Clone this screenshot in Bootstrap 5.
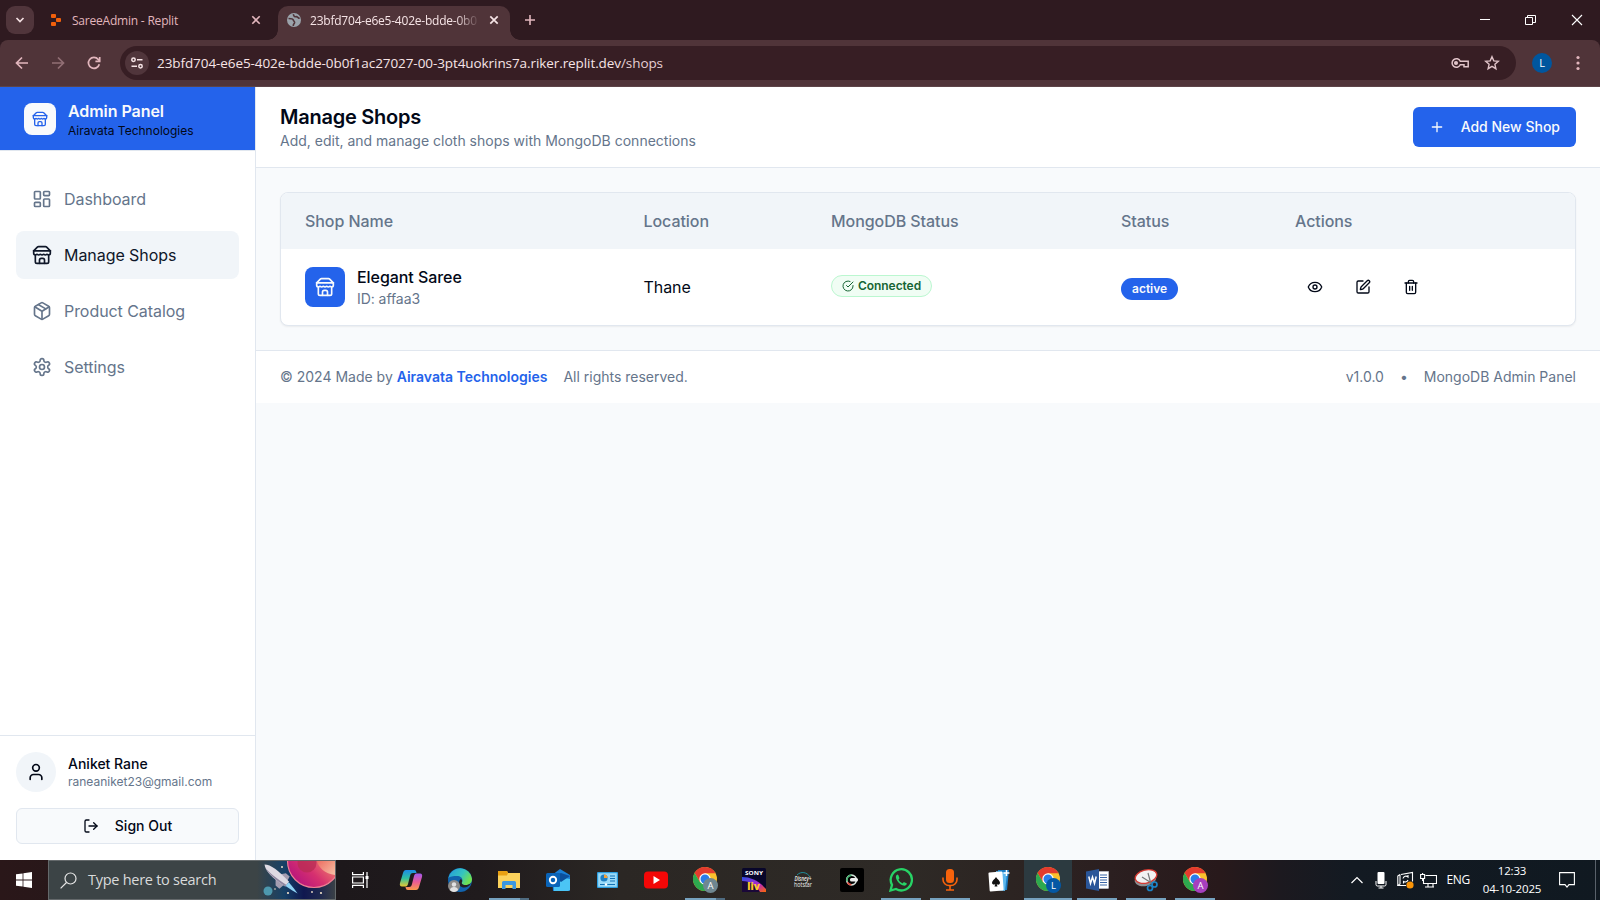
<!DOCTYPE html>
<html lang="en">
<head>
<meta charset="utf-8">
<meta name="viewport" content="width=device-width, initial-scale=1">
<title>Manage Shops</title>
<link href="https://cdn.jsdelivr.net/npm/bootstrap@5.3.0/dist/css/bootstrap.min.css" rel="stylesheet">
<script src="https://cdn.jsdelivr.net/npm/bootstrap@5.3.0/dist/js/bootstrap.bundle.min.js" defer></script>
<style>
  :root { --brand:#2463eb; --muted:#65758b; --ink:#020817; --line:#e1e7ef; --soft:#f1f5f9; --page:#f8fafc; }
  body { font-family:Inter,sans-serif; color:var(--ink); width:1600px; height:900px; overflow:hidden; background:var(--page); }
  svg { display:block; flex:none; }
  .lu { fill:none; stroke:currentColor; stroke-width:2; stroke-linecap:round; stroke-linejoin:round; }
  .sys { font-family:"Open Sans","Noto Sans",sans-serif; }
  /* browser */
  .tabstrip { height:40px; background:#2f1a20; color:#e2b6bd; font-size:12px; }
  .tab-menu { width:28px; height:28px; margin:6px 0 0 6px; border-radius:9px; background:#50353b; color:#f3dfe2; }
  .tab-idle { width:243px; height:40px; padding:0 16px 0 15px; }
  .tab-idle span { margin:1px 0 0 9px; letter-spacing:-.21px; }
  .tab-live { width:232px; height:34px; margin:6px 0 0 1px; background:#503439; border-radius:10px 10px 0 0; padding:0 11px 6px 10px; color:#f6e4e6; position:relative; }
  .tab-live::before,.tab-live::after { content:""; position:absolute; bottom:0; width:10px; height:10px; }
  .tab-live::before { left:-10px; background:radial-gradient(circle at 0 0,transparent 9.5px,#503439 10px); }
  .tab-live::after { right:-10px; background:radial-gradient(circle at 100% 0,transparent 9.5px,#503439 10px); }
  .tab-label { width:173px; margin:1px 0 0 9px; white-space:nowrap; letter-spacing:-.22px; -webkit-mask-image:linear-gradient(90deg,#000 146px,transparent 170px); mask-image:linear-gradient(90deg,#000 146px,transparent 170px); }
  .toolbar-wrap { height:47px; background:#2f1a20; }
  .toolbar { height:47px; background:#503439; border-radius:8px 8px 0 0; color:#e2b6bd; border-bottom:1px solid #5d4448; }
  .omnibox { height:34px; width:1396px; border-radius:17px; background:#371e24; color:#f6e4e6; font-size:13.5px; letter-spacing:-.08px; }
  .site-chip { width:24px; height:24px; border-radius:50%; background:#50353b; margin-left:5px; }
  .avatar-l { width:20px; height:20px; border-radius:50%; background:#00569e; color:#fff; font-size:11px; }
  /* app */
  .app { height:773px; }
  .sidebar { width:256px; flex:none; background:#fff; border-right:1px solid var(--line); }
  .brand { height:64px; background:var(--brand); border-bottom:1px solid var(--line); padding:0 24px; gap:12px; }
  .brand-logo { width:32px; height:32px; border-radius:8px; background:var(--page); color:var(--brand); }
  .brand h1 { font-size:16px; font-weight:600; line-height:24px; margin:0; color:var(--page); letter-spacing:-.06px; }
  .brand p { font-size:12px; line-height:16px; margin:0; }
  .side-nav { padding:24px 16px; gap:8px; }
  .side-link { height:48px; padding:0 16px; gap:12px; color:var(--muted); border-radius:8px; font-size:16px; letter-spacing:-.06px; }
  .side-link.active { background:var(--soft); color:#0f1729; }
  .side-user { border-top:1px solid var(--line); padding:16px; }
  .user-pic { width:40px; height:40px; border-radius:50%; background:var(--soft); }
  .txt-sm { font-size:14px; line-height:20px; }
  .txt-xs { font-size:12px; line-height:16px; }
  .med { font-weight:500; }
  .muted { color:var(--muted); }
  .btn-out { height:36px; border:1px solid var(--line); border-radius:6px; background:var(--page); gap:16px; font-size:14px; line-height:20px; font-weight:500; }
  .page-head { background:#fff; border-bottom:1px solid var(--line); padding:16px 24px; }
  .page-head h2 { font-size:20px; line-height:28px; font-weight:600; margin:0; letter-spacing:-.24px; }
  .btn-add { height:40px; padding:0 16px; gap:16px; background:var(--brand); color:var(--page); border-radius:6px; font-size:14px; line-height:20px; font-weight:500; }
  .shops { border:1px solid var(--line); border-radius:8px; overflow:hidden; background:#fff; box-shadow:0 1px 2px rgba(0,0,0,.06); }
  .shops table { table-layout:fixed; width:100%; border-collapse:collapse; letter-spacing:-.06px; }
  .shops th { height:56px; padding:0 24px; background:var(--soft); color:var(--muted); font-weight:500; }
  .shops td { height:76px; padding:0 24px; }
  .shop-ico { width:40px; height:40px; border-radius:8px; background:var(--brand); color:var(--page); }
  .pill { height:22px; border-radius:11px; padding:0 10px; font-size:12px; line-height:16px; font-weight:600; border:1px solid transparent; }
  .pill-ok { background:#f0fdf4; border-color:#bbf7d0; color:#166534; gap:4px; margin-bottom:3px; }
  .pill-on { background:var(--brand); color:var(--page); margin-top:4px; letter-spacing:0; }
  .act { width:40px; height:36px; }
  .app-foot { background:#fff; border-top:1px solid var(--line); padding:16px 24px; }
  .app-foot b { color:var(--brand); font-weight:600; }
  /* taskbar */
  .taskbar { height:40px; color:#fff; background:linear-gradient(90deg,#2a1719 0,#1d181b 340px,#201b1d 480px,#2b2724 620px,#2e2a26 900px,#2c2422 1010px,#2b1f20 1110px,#28191b 1220px,#1c191f 1280px,#131a22 1350px,#101921 1600px); }
  .tb-start { width:48px; }
  .tb-search { width:288px; background:#3c4446; border:1px solid #64696b; font-size:14.5px; letter-spacing:-.27px; color:#d9dbdb; padding-left:11px; }
  .tb-view { width:51px; padding-right:3px; }
  .tb-app { width:49px; height:40px; padding-right:1px; position:relative; }
  .tb-app.run::after { content:""; position:absolute; left:4px; right:5px; bottom:0; height:2px; background:#76a2bf; }
  .tb-app.multi::after { background:linear-gradient(90deg,#76a2bf 31px,#4f6b80 31px); }
  .tb-app.live { background:linear-gradient(#2c3a40,#2c3a40) 0 0/48px 40px no-repeat; }
  .tb-app.live::after { left:0; right:1px; }
  .lang { margin-left:9px; font-size:12px; letter-spacing:-.3px; }
  .clock { font-size:11.5px; line-height:18px; width:76px; margin-left:4px; letter-spacing:-.15px; }
</style>
</head>
<body class="d-flex flex-column">
<svg width="0" height="0" class="position-absolute">
  <defs>
    <symbol id="store" viewBox="0 0 24 24"><path d="m2 7 4.41-4.41A2 2 0 0 1 7.83 2h8.34a2 2 0 0 1 1.42.59L22 7"/><path d="M4 12v8a2 2 0 0 0 2 2h12a2 2 0 0 0 2-2v-8"/><path d="M15 22v-4a2 2 0 0 0-2-2h-2a2 2 0 0 0-2 2v4"/><path d="M2 7h20"/><path d="M22 7v3a2 2 0 0 1-2 2a2.7 2.7 0 0 1-1.59-.63.7.7 0 0 0-.82 0A2.7 2.7 0 0 1 16 12a2.7 2.7 0 0 1-1.59-.63.7.7 0 0 0-.82 0A2.7 2.7 0 0 1 12 12a2.7 2.7 0 0 1-1.59-.63.7.7 0 0 0-.82 0A2.7 2.7 0 0 1 8 12a2.7 2.7 0 0 1-1.59-.63.7.7 0 0 0-.82 0A2.7 2.7 0 0 1 4 12a2 2 0 0 1-2-2V7"/></symbol>
    <symbol id="chrome" viewBox="0 0 24 24"><circle cx="12" cy="12" r="12" fill="#fbc02d"/><path d="M12 6.3h10.5A12 12 0 0 0 1.6 6l5 8.5z" fill="#e33b2e"/><path d="M1.600 6A12 12 0 0 0 12 24l5-8.800-10 0z" fill="#2da94f"/><circle cx="12" cy="12" r="5.7" fill="#fff"/><circle cx="12" cy="12" r="4.5" fill="#2a7de9"/></symbol>
    <linearGradient id="gCopA" x1="0" y1="0" x2="0" y2="1"><stop offset="0" stop-color="#1b8be8"/><stop offset=".5" stop-color="#2fc1a0"/><stop offset="1" stop-color="#e9c631"/></linearGradient>
    <linearGradient id="gCopB" x1="0" y1="0" x2="0" y2="1"><stop offset="0" stop-color="#a259ee"/><stop offset=".5" stop-color="#ea5a96"/><stop offset="1" stop-color="#fb9a4b"/></linearGradient>
    <linearGradient id="gEdge" x1="0" y1="0" x2="1" y2=".5"><stop offset="0" stop-color="#2499dc"/><stop offset=".6" stop-color="#35c4c0"/><stop offset="1" stop-color="#6fe052"/></linearGradient>
    <linearGradient id="gSony" x1="0" y1="0" x2="1" y2="1"><stop offset="0" stop-color="#2a50e8"/><stop offset=".6" stop-color="#b225c9"/><stop offset="1" stop-color="#ff6a00"/></linearGradient>
    <linearGradient id="gPlanet" x1=".2" y1="1" x2=".75" y2=".45"><stop offset="0" stop-color="#b3127f"/><stop offset=".5" stop-color="#d6306f"/><stop offset="1" stop-color="#f0806c"/></linearGradient>
    <linearGradient id="gSky" x1="0" y1="0" x2="1" y2="0"><stop offset="0" stop-color="#3c4446"/><stop offset=".35" stop-color="#12406a"/><stop offset=".6" stop-color="#0b1250"/><stop offset=".8" stop-color="#1a2450"/><stop offset="1" stop-color="#3a4046"/></linearGradient>
    <linearGradient id="gPeach" x1="0" y1="0" x2="1" y2="1"><stop offset="0" stop-color="#ee6f60"/><stop offset="1" stop-color="#f8d0b0"/></linearGradient>
  </defs>
</svg>

<header class="sys">
  <div class="tabstrip d-flex">
    <div class="tab-menu d-flex align-items-center justify-content-center"><svg width="10" height="10" viewBox="0 0 10 10" fill="none" stroke="currentColor" stroke-width="1.7"><path d="m1.500 3 3.500 3.500L8.500 3"/></svg></div>
    <div class="tab-idle d-flex align-items-center">
      <svg width="14" height="14" viewBox="0 0 14 14" fill="#f2600c"><rect x="2" y="1" width="5" height="4" rx="1"/><rect x="7" y="5" width="5" height="4" rx="1"/><rect x="2" y="9" width="5" height="4" rx="1"/></svg>
      <span>SareeAdmin - Replit</span>
      <svg class="ms-auto" width="10" height="10" viewBox="0 0 10 10" stroke="currentColor" stroke-width="1.6"><path d="m1.300 1.300 7.400 7.400M8.700 1.300 1.300 8.700"/></svg>
    </div>
    <div class="tab-live d-flex align-items-center">
      <svg style="margin-left:-1px" width="14" height="14" viewBox="0 0 14 14"><circle cx="7" cy="7" r="7" fill="#9ba3ab"/><path d="M1.500 5.500c2.500 0 4.500 0 4.800 1.500.3 1.400 1.500 1.300 1.300 2.700-.2 1.200-1.500 1.300-1.300 3.300M6.500 1.200C6.300 3.200 8 4 9.200 3.600c1.300-.3 1.800 1.700 3.500 1.700" fill="none" stroke="#503439" stroke-width="1.600"/></svg>
      <div class="tab-label">23bfd704-e6e5-402e-bdde-0b0</div>
      <svg class="ms-auto" width="10" height="10" viewBox="0 0 10 10" stroke="currentColor" stroke-width="1.700"><path d="m1.300 1.300 7.400 7.400M8.700 1.300 1.300 8.700"/></svg>
    </div>
    <svg class="align-self-center" style="margin-left:14px" width="12" height="12" viewBox="0 0 12 12" stroke="currentColor" stroke-width="1.6"><path d="M6 1v10M1 6h10"/></svg>
    <div class="ms-auto d-flex align-items-center text-white" style="gap:35px;padding-right:17px">
      <svg width="10" height="12" viewBox="0 0 10 12" stroke="currentColor"><path d="M0 5.500h10"/></svg>
      <svg width="11" height="12" viewBox="0 0 11 12" stroke="currentColor" fill="none"><path d="M.5 3.500h7v7h-7zM2.500 3.500v-2h8v7h-3"/></svg>
      <svg width="12" height="12" viewBox="0 0 12 12" stroke="currentColor" stroke-width="1.100"><path d="m1 1 10 10M11 1 1 11"/></svg>
    </div>
  </div>
  <div class="toolbar-wrap"><div class="toolbar d-flex align-items-center">
    <svg style="margin-left:15px" width="14" height="14" viewBox="0 0 14 14" fill="none" stroke="currentColor" stroke-width="1.700"><path d="M13 7H2M7 1.500 1.500 7 7 12.500"/></svg>
    <svg style="margin-left:22px;opacity:.45" width="14" height="14" viewBox="0 0 14 14" fill="none" stroke="currentColor" stroke-width="1.700"><path d="M1 7h11M7 1.500 12.500 7 7 12.500"/></svg>
    <svg style="margin-left:22px" width="14" height="14" viewBox="0 0 14 14" fill="none" stroke="currentColor" stroke-width="1.700"><path d="M12.300 8.200A5.500 5.500 0 1 1 11.200 3.400L12.600 5"/><path d="M12.700 1v4.300H8.400"/></svg>
    <div class="omnibox d-flex align-items-center" style="margin-left:19px">
      <div class="site-chip d-flex align-items-center justify-content-center"><svg width="14" height="14" viewBox="0 0 14 14" fill="none" stroke="currentColor" stroke-width="1.500"><circle cx="3.500" cy="3.800" r="1.700"/><path d="M7 3.800h5.500M1.500 10.200H7"/><circle cx="10.500" cy="10.200" r="1.700"/></svg></div>
      <span style="margin-left:8px">23bfd704-e6e5-402e-bdde-0b0f1ac27027-00-3pt4uokrins7a.riker.replit.dev<span style="color:#e6d0d4">/shops</span></span>
      <svg class="ms-auto" width="18" height="12" viewBox="0 0 18 12" fill="none" stroke="#e0c3c8" stroke-width="1.500"><path d="M9.300 4.200A4.300 4.300 0 1 0 9.300 7.800H13v2h4.200V4.200z"/><circle cx="5" cy="6" r="1.300" fill="#e0c3c8"/></svg>
      <svg style="margin:0 16px 0 15px" width="16" height="16" viewBox="0 0 16 16" fill="none" stroke="#e0c3c8" stroke-width="1.400"><path d="m8 1.700 1.800 4.200 4.500.4-3.400 3 1 4.400L8 11.400l-3.900 2.300 1-4.400-3.400-3 4.500-.4z"/></svg>
    </div>
    <div class="avatar-l d-flex align-items-center justify-content-center" style="margin-left:16px">L</div>
    <svg style="margin-left:24px" width="4" height="16" viewBox="0 0 4 16" fill="currentColor"><circle cx="2" cy="2.500" r="1.600"/><circle cx="2" cy="8" r="1.600"/><circle cx="2" cy="13.500" r="1.600"/></svg>
  </div></div>
</header>

<div class="app d-flex">
  <aside class="sidebar d-flex flex-column">
    <div class="brand d-flex align-items-center">
      <div class="brand-logo d-flex align-items-center justify-content-center"><svg class="lu" width="16" height="16"><use href="#store"/></svg></div>
      <div><h1>Admin Panel</h1><p>Airavata Technologies</p></div>
    </div>
    <nav class="side-nav nav flex-column flex-grow-1">
      <a class="side-link d-flex align-items-center text-decoration-none"><svg class="lu" width="20" height="20" viewBox="0 0 24 24"><rect width="7" height="9" x="3" y="3" rx="1"/><rect width="7" height="5" x="14" y="3" rx="1"/><rect width="7" height="9" x="14" y="12" rx="1"/><rect width="7" height="5" x="3" y="16" rx="1"/></svg><span>Dashboard</span></a>
      <a class="side-link active d-flex align-items-center text-decoration-none"><svg class="lu" width="20" height="20"><use href="#store"/></svg><span>Manage Shops</span></a>
      <a class="side-link d-flex align-items-center text-decoration-none"><svg class="lu" width="20" height="20" viewBox="0 0 24 24"><path d="M11 21.730a2 2 0 0 0 2 0l7-4A2 2 0 0 0 21 16V8a2 2 0 0 0-1-1.730l-7-4a2 2 0 0 0-2 0l-7 4A2 2 0 0 0 3 8v8a2 2 0 0 0 1 1.730z"/><path d="M12 22V12"/><path d="m3.300 7 7.703 4.734a2 2 0 0 0 1.994 0L20.700 7"/><path d="m7.500 4.270 9 5.150"/></svg><span>Product Catalog</span></a>
      <a class="side-link d-flex align-items-center text-decoration-none"><svg class="lu" width="20" height="20" viewBox="0 0 24 24"><path d="M12.220 2h-.44a2 2 0 0 0-2 2v.18a2 2 0 0 1-1 1.730l-.43.25a2 2 0 0 1-2 0l-.15-.08a2 2 0 0 0-2.730.73l-.22.38a2 2 0 0 0 .73 2.730l.15.1a2 2 0 0 1 1 1.720v.51a2 2 0 0 1-1 1.740l-.15.09a2 2 0 0 0-.73 2.730l.22.38a2 2 0 0 0 2.730.73l.15-.08a2 2 0 0 1 2 0l.43.25a2 2 0 0 1 1 1.730V20a2 2 0 0 0 2 2h.44a2 2 0 0 0 2-2v-.18a2 2 0 0 1 1-1.730l.43-.25a2 2 0 0 1 2 0l.15.08a2 2 0 0 0 2.730-.73l.22-.39a2 2 0 0 0-.73-2.730l-.15-.08a2 2 0 0 1-1-1.740v-.5a2 2 0 0 1 1-1.740l.15-.09a2 2 0 0 0 .73-2.730l-.22-.38a2 2 0 0 0-2.730-.73l-.15.08a2 2 0 0 1-2 0l-.43-.25a2 2 0 0 1-1-1.730V4a2 2 0 0 0-2-2z"/><circle cx="12" cy="12" r="3"/></svg><span>Settings</span></a>
    </nav>
    <div class="side-user">
      <div class="d-flex align-items-center mb-3" style="gap:12px">
        <div class="user-pic d-flex align-items-center justify-content-center"><svg class="lu" width="20" height="20" viewBox="0 0 24 24"><path d="M19 21v-2a4 4 0 0 0-4-4H9a4 4 0 0 0-4 4v2"/><circle cx="12" cy="7" r="4"/></svg></div>
        <div><div class="txt-sm med">Aniket Rane</div><div class="txt-xs muted">raneaniket23@gmail.com</div></div>
      </div>
      <div class="btn-out d-flex align-items-center justify-content-center"><svg class="lu" width="16" height="16" viewBox="0 0 24 24"><path d="M9 21H5a2 2 0 0 1-2-2V5a2 2 0 0 1 2-2h4"/><path d="m16 17 5-5-5-5"/><path d="M21 12H9"/></svg><span>Sign Out</span></div>
    </div>
  </aside>

  <div class="flex-grow-1">
    <div class="page-head d-flex align-items-center justify-content-between">
      <div><h2>Manage Shops</h2><div class="txt-sm muted">Add, edit, and manage cloth shops with MongoDB connections</div></div>
      <div class="btn-add d-flex align-items-center"><svg class="lu" width="16" height="16" viewBox="0 0 24 24"><path d="M5 12h14M12 5v14"/></svg><span>Add New Shop</span></div>
    </div>
    <main class="p-4">
      <div class="shops">
        <table>
          <colgroup><col style="width:338.500px"><col style="width:187.500px"><col style="width:290px"><col style="width:174px"><col></colgroup>
          <thead><tr><th>Shop Name</th><th>Location</th><th>MongoDB Status</th><th>Status</th><th>Actions</th></tr></thead>
          <tbody><tr>
            <td><div class="d-flex align-items-center" style="gap:12px"><div class="shop-ico d-flex align-items-center justify-content-center"><svg class="lu" width="20" height="20"><use href="#store"/></svg></div><div><div class="med">Elegant Saree</div><div class="txt-sm muted">ID: affaa3</div></div></div></td>
            <td>Thane</td>
            <td><div class="pill pill-ok d-inline-flex align-items-center align-middle"><svg class="lu" width="12" height="12" viewBox="0 0 24 24"><path d="M22 11.080V12a10 10 0 1 1-5.930-9.140"/><path d="m9 11 3 3L22 4"/></svg><span>Connected</span></div></td>
            <td><div class="pill pill-on d-inline-flex align-items-center align-middle">active</div></td>
            <td><div class="d-flex gap-2" style="margin-left:-.5px">
              <div class="act d-flex align-items-center justify-content-center"><svg class="lu" width="16" height="16" viewBox="0 0 24 24"><path d="M2.062 12.348a1 1 0 0 1 0-.696 10.750 10.750 0 0 1 19.876 0 1 1 0 0 1 0 .696 10.750 10.750 0 0 1-19.876 0"/><circle cx="12" cy="12" r="3"/></svg></div>
              <div class="act d-flex align-items-center justify-content-center"><svg class="lu" width="16" height="16" viewBox="0 0 24 24"><path d="M12 3H5a2 2 0 0 0-2 2v14a2 2 0 0 0 2 2h14a2 2 0 0 0 2-2v-7"/><path d="M18.375 2.625a1 1 0 0 1 3 3l-9.013 9.014a2 2 0 0 1-.853.505l-2.873.84a.5.5 0 0 1-.62-.62l.84-2.873a2 2 0 0 1 .506-.852z"/></svg></div>
              <div class="act d-flex align-items-center justify-content-center"><svg class="lu" width="16" height="16" viewBox="0 0 24 24"><path d="M3 6h18"/><path d="M19 6v14c0 1-1 2-2 2H7c-1 0-2-1-2-2V6"/><path d="M8 6V4c0-1 1-2 2-2h4c1 0 2 1 2 2v2"/><path d="M10 11v6M14 11v6"/></svg></div>
            </div></td>
          </tr></tbody>
        </table>
      </div>
    </main>
    <footer class="app-foot txt-sm muted d-flex justify-content-between">
      <div class="d-flex gap-3"><span>© 2024 Made by <b>Airavata Technologies</b></span><span>All rights reserved.</span></div>
      <div class="d-flex gap-3"><span>v1.0.0</span><span>•</span><span>MongoDB Admin Panel</span></div>
    </footer>
  </div>
</div>

<footer class="taskbar sys d-flex">
  <div class="tb-start d-flex align-items-center justify-content-center"><svg width="16" height="16" viewBox="0 0 16 16" fill="#fff"><path d="M0 2.300 6.600 1.400v6.200H0zM7.400 1.300 16 0v7.600H7.400zM0 8.400h6.600v6.200L0 13.700zM7.400 8.400H16V16l-8.600-1.300z"/></svg></div>
  <div class="tb-search d-flex align-items-center">
    <svg width="17" height="17" viewBox="0 0 17 17" fill="none" stroke="#e6e6e6" stroke-width="1.200"><circle cx="10.500" cy="6.500" r="5.500"/><path d="M6.500 10.500.6 16.400"/></svg>
    <span style="margin-left:11px">Type here to search</span>
    <svg class="ms-auto" width="78" height="38" viewBox="0 0 78 38">
      <rect width="78" height="38" fill="url(#gSky)" opacity=".9"/>
      <circle cx="57" cy="0" r="26.500" fill="url(#gPlanet)" stroke="#ee7f93" stroke-width="1.200"/>
      <path d="M60 0c1 6 8 13 18 14V0z" fill="url(#gPeach)" opacity=".85"/>
      <circle cx="50" cy="2" r="9.500" fill="#b92c55" opacity=".8"/>
      <circle cx="11" cy="30" r="4.500" fill="#4d98ae"/>
      <g transform="translate(7.500 3.500) rotate(40)">
        <path d="M17-1 22-7h5l1 5zM17 3l5 6h5l1-6z" fill="#a49db0"/>
        <path d="M0 0c5-4 14-4.500 30-2.500v6C14 5.500 5 4.500 0 0z" fill="#dedae3"/>
        <path d="M3 2.200c6 2.500 17 2.500 27 1.300V1.500C18 3 10 3.200 3 2.200z" fill="#8f86a0"/>
        <path d="M30-2 38-.5l6 1.500-6 1-8 1z" fill="#8fd3f5"/>
      </g>
      <g fill="#f0e0c8"><circle cx="25" cy="6" r="1"/><circle cx="18" cy="28" r=".8"/><circle cx="31" cy="32" r="1.100"/><circle cx="55" cy="31" r=".9"/><circle cx="64" cy="32" r="1.100"/></g>
    </svg>
  </div>
  <div class="tb-view d-flex align-items-center justify-content-center"><svg width="17" height="16" viewBox="0 0 17 16" fill="none" stroke="#fff" stroke-width="1.200"><path d="M.6 0v2.600h10.800V0M.6 16v-2.600h10.800V16M.6 5h10.800v6H.6zM15 0v16"/><path d="M13.500 4h3v3h-3z" fill="#fff" stroke="none"/></svg></div>

  <div class="tb-app d-flex align-items-center justify-content-center"><svg width="24" height="24" viewBox="0 0 24 24"><path d="M7 2h8c2 0 2 1 2.500 3H14c-2 0-2.500 1-3 3l-2 8c-.5 2-1.500 2.500-3 2.500H3C1 18.500.5 17 1 15L4 5c.5-2 1.500-3 3-3z" fill="url(#gCopA)"/><path d="M17 22H9c-2 0-2-1-2.500-3H10c2 0 2.500-1 3-3l2-8c.5-2 1.500-2.500 3-2.500h3c2 0 2.500 1.500 2 3.500l-3 10c-.5 2-1.500 3-3 3z" fill="url(#gCopB)"/></svg></div>
  <div class="tb-app d-flex align-items-center justify-content-center"><svg width="24" height="24" viewBox="0 0 24 24"><circle cx="12" cy="12" r="12" fill="#1263ad"/><path d="M.3 10A12 12 0 0 1 24 11c0 4-3 6-6.500 6-3 0-4.500-1.500-3.500-3 1.500-3-1-6-5-6C5 8 2 8.500.3 10z" fill="url(#gEdge)"/><path d="M14 14c-1 1.500.5 3 3.500 3 2 0 4-.5 5.500-2-3 6-9 5-11 3s-1-6 1-7c1 1 1.500 2 1 3z" fill="#242023"/><circle cx="6" cy="18" r="6" fill="#8d8b89"/><circle cx="6" cy="16.500" r="2.200" fill="#e2e2e2"/><path d="M2 22c0-4 8-4 8 0-2 2.500-6 2.500-8 0z" fill="#e2e2e2"/></svg></div>
  <div class="tb-app run multi d-flex align-items-center justify-content-center"><svg width="22" height="18" viewBox="0 0 22 18"><path d="M0 0h9l1 2h12v15H0z" fill="#fbd25c"/><path d="M0 0h9l1 2-1 2.500H0z" fill="#e8a012"/><path d="M4 18v-6.500q0-1.500 1.500-1.500h11Q18 10 18 11.500V18h-3.500v-4h-7v4z" fill="#3c97e0"/></svg></div>
  <div class="tb-app d-flex align-items-center justify-content-center"><svg width="24" height="22" viewBox="0 0 24 22"><path d="M6 6 14 0l10 6v15a1 1 0 0 1-1 1H7z" fill="#1a7fd6"/><path d="m7 7 17 3v11l-2 1H8z" fill="#4bc5f5"/><path d="m24 7-9 6-8-6 8-3z" fill="#0b4f9c"/><rect y="4" width="14" height="14" rx="1.500" fill="#0a64b8"/><circle cx="7" cy="11" r="3.200" fill="none" stroke="#fff" stroke-width="1.900"/></svg></div>
  <div class="tb-app d-flex align-items-center justify-content-center"><svg width="21" height="16" viewBox="0 0 21 16"><rect width="21" height="16" rx="1" fill="#2d9fe0"/><rect x="1.200" y="1.200" width="18.600" height="13.600" fill="#9adaf8"/><circle cx="7" cy="6" r="3.600" fill="#1e7fc2"/><path d="M7 6V2.400A3.600 3.600 0 0 1 10.600 6z" fill="#f1a13b"/><path d="M13 4h5M13 6.500h5M13 9h5" stroke="#1272b6" stroke-width="1.200"/><path d="M3 12.500h15" stroke="#1272b6"/><circle cx="9" cy="12.500" r="1.200" fill="#fff"/></svg></div>
  <div class="tb-app d-flex align-items-center justify-content-center"><svg width="24" height="18" viewBox="0 0 24 18"><rect y=".5" width="24" height="17" rx="4" fill="#f40707"/><path d="m9.500 5 6.500 4-6.500 4z" fill="#fff"/></svg></div>
  <div class="tb-app run multi d-flex align-items-center justify-content-center"><svg width="26" height="26" viewBox="0 0 26 26"><use href="#chrome" x="1" width="24" height="24"/><circle cx="18.500" cy="18.500" r="7.500" fill="#6f8791"/><text x="18.500" y="22" font-size="9.500" fill="#fff" text-anchor="middle">A</text></svg></div>
  <div class="tb-app d-flex align-items-center justify-content-center"><svg width="24" height="24" viewBox="0 0 24 24"><rect width="24" height="24" rx="1.500" fill="#08062a"/><path d="M0 9c9 0 17 4 24 12v3H0z" fill="url(#gSony)"/><path d="M0 13c8 0 14 4 18 11H0z" fill="#1a0838"/><text x="12" y="7" font-size="6" font-weight="700" fill="#fff" text-anchor="middle" textLength="18" lengthAdjust="spacingAndGlyphs">SONY</text><text x="11.500" y="22" font-size="10" font-weight="800" fill="#ffc72c" text-anchor="middle">liv</text></svg></div>
  <div class="tb-app d-flex align-items-center justify-content-center"><svg width="24" height="24" viewBox="0 0 24 24"><path d="M6 7c4-4 10-3 13 2" fill="none" stroke="#1d8f9c" stroke-width="1"/><text x="12" y="12.500" font-size="7" font-style="italic" font-weight="600" fill="#eee" text-anchor="middle" textLength="17" lengthAdjust="spacingAndGlyphs">Disney+</text><text x="12" y="19" font-size="6.500" fill="#eee" text-anchor="middle" textLength="18" lengthAdjust="spacingAndGlyphs">hotstar</text></svg></div>
  <div class="tb-app d-flex align-items-center justify-content-center"><svg width="24" height="24" viewBox="0 0 24 24"><rect width="24" height="24" rx="2" fill="#000"/><circle cx="11.500" cy="12" r="4.800" fill="none" stroke="#d9e3dc" stroke-width="1.700"/><path d="M11.500 7.200a4.800 4.800 0 0 0-4.500 6" fill="none" stroke="#3db36b" stroke-width="1.500"/><path d="M7.500 14.500a4.800 4.800 0 0 0 4 2.300" fill="none" stroke="#e2483b" stroke-width="1.500"/><rect x="10" y="10" width="8" height="3.600" rx="1.500" fill="#eee"/></svg></div>
  <div class="tb-app run d-flex align-items-center justify-content-center"><svg width="24" height="24" viewBox="0 0 24 24"><path d="m1.500 22.500 1.500-5.600A10.600 10.600 0 1 1 7 21z" fill="none" stroke="#27d366" stroke-width="2.300"/><path d="M8.300 6.500c-1.500.8-1.800 2.500-1 4.500 1.200 3 3.300 5.200 6.200 6.300 2.500.9 4 .1 4.400-1.800l-3-1.600-1.400 1.500c-2-.8-3.300-2.200-4-3.800l1-1.400-1.200-3.200z" fill="#27d366"/></svg></div>
  <div class="tb-app run d-flex align-items-center justify-content-center"><svg width="16" height="22" viewBox="0 0 16 22"><rect x="4" width="8" height="14" rx="3.500" fill="#f7630c"/><path d="M1 8.500v2a6 6 0 0 0 6 6h2a6 6 0 0 0 6-6v-2M8 16.500V21M4 21h8" fill="none" stroke="#f7630c" stroke-width="1.600"/></svg></div>
  <div class="tb-app d-flex align-items-center justify-content-center"><svg width="22" height="23" viewBox="0 0 22 23"><path d="M10 1h11l-2 20h-9z" fill="#1b7ec6"/><path d="m8 2 11 2-2 18-8-1z" fill="#5bb7ee"/><rect x="1" y="3" width="14" height="19" rx="1" fill="#fff" transform="rotate(-4 8 12)"/><path d="M8 8c1 2 4 3.500 4 5.800 0 2-2.300 2.400-3.300 1.200l.8 2.500h-3l.8-2.500C6 16.200 4 15.500 4 13.800 4 11.500 7 10 8 8z" fill="#111"/><path d="M18.500 1v6M15.500 4h6" stroke="#fff" stroke-width="1.500"/></svg></div>
  <div class="tb-app run live d-flex align-items-center justify-content-center"><svg width="26" height="26" viewBox="0 0 26 26"><use href="#chrome" x="1" width="24" height="24"/><circle cx="18.500" cy="18.500" r="7.500" fill="#0458a4"/><text x="18.500" y="22" font-size="9.500" fill="#fff" text-anchor="middle">L</text></svg></div>
  <div class="tb-app run d-flex align-items-center justify-content-center"><svg width="23" height="22" viewBox="0 0 23 22"><rect x="12" y="2.500" width="10.500" height="17" fill="#fff" stroke="#cfd9ea" stroke-width=".5"/><path d="M14 6h7M14 8.500h7M14 11h7M14 13.500h7M14 16h7" stroke="#3b66a8" stroke-width="1.200"/><path d="M0 2.500 13 0v22L0 19.500z" fill="#2a5699"/><path d="m2.800 7.500 1.700 7 2-6.500 2 6.500 1.700-7" fill="none" stroke="#fff" stroke-width="1.500"/></svg></div>
  <div class="tb-app run d-flex align-items-center justify-content-center"><svg width="24" height="24" viewBox="0 0 24 24"><ellipse cx="11.500" cy="11" rx="11" ry="7" fill="#8d8f93" transform="rotate(-14 11.500 11)"/><ellipse cx="12" cy="8.500" rx="11" ry="6.500" fill="#f2f2f2" stroke="#d63a32" stroke-width="1.300" transform="rotate(-14 12 8.500)"/><path d="m14 5 3 11M8 9l11 7" stroke="#777" stroke-width="1.200"/><circle cx="16" cy="20" r="2.500" fill="none" stroke="#1b84c7" stroke-width="1.700"/><circle cx="20.500" cy="16.500" r="2.500" fill="none" stroke="#1b84c7" stroke-width="1.700"/></svg></div>
  <div class="tb-app run d-flex align-items-center justify-content-center"><svg width="26" height="26" viewBox="0 0 26 26"><use href="#chrome" x="1" width="24" height="24"/><circle cx="18.500" cy="18.500" r="7.500" fill="#a63fbd"/><text x="18.500" y="22" font-size="9.500" fill="#fff" text-anchor="middle">A</text></svg></div>

  <div class="ms-auto d-flex align-items-center">
    <svg width="12" height="8" viewBox="0 0 12 8" fill="none" stroke="#fff" stroke-width="1.200"><path d="m.5 7 5.500-5.500L11.500 7"/></svg>
    <svg style="margin-left:12px" width="12" height="18" viewBox="0 0 12 18"><rect x="2.500" y="1" width="7" height="12" rx="1" fill="#fff"/><path d="M1 10v3.500q0 1.500 1.500 1.500h7q1.500 0 1.500-1.500V10M6 15v2M3.500 17h5" fill="none" stroke="#fff"/></svg>
    <svg style="margin-left:10px" width="18" height="18" viewBox="0 0 18 18" fill="none" stroke="#fff" stroke-width="1.100"><path d="M4 3.500 15.500 1.500v9M9 14.500H.8L3 13V3.500M.8 14.500V5L3 3.500"/><path d="M6 7.500a3 3 0 0 1 5-1.500V4M11 9a3 3 0 0 1-4.500 1.500v2"/><circle cx="13" cy="14" r="3.600" fill="#fb9407" stroke="none"/></svg>
    <svg style="margin-left:5px" width="17" height="16" viewBox="0 0 17 16" fill="none" stroke="#fff" stroke-width="1.100"><path d="M5.500 3.500h11v8H3.500V7M8 11.500V15M13 11.500V15M5 15h9"/><path d="M.6 2.500h4v4h-4zM2.600 1v1.500M2.600 6.500V9"/></svg>
    <span class="lang">ENG</span>
    <div class="clock text-center"><div>12:33</div><div>04-10-2025</div></div>
    <svg style="margin-left:9px" width="16" height="16" viewBox="0 0 16 16" fill="none" stroke="#fff" stroke-width="1.100"><path d="M.6.6h14.800v12H10l-2 2.500-2-2.500H.6z"/></svg>
    <div style="width:1px;height:40px;margin:0 4px 0 20px;background:#59616a"></div>
  </div>
</footer>
</body>
</html>
